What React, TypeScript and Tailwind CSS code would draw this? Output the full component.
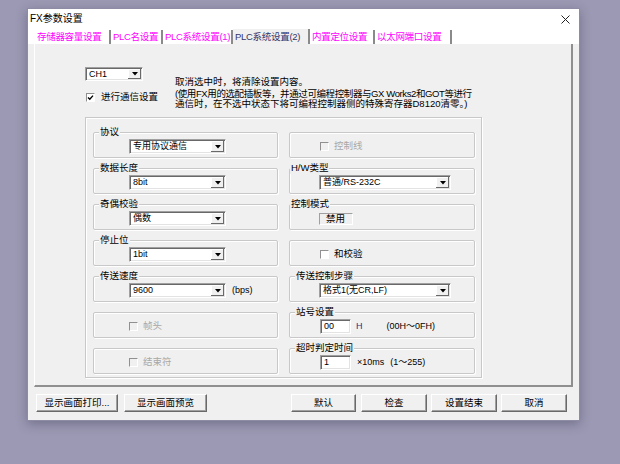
import React from 'react';

const sunken =
  'border border-t-[#a0a0a0] border-l-[#a0a0a0] border-r-white border-b-white shadow-[inset_1px_1px_0_#696969,inset_-1px_-1px_0_#e3e3e3]';

function Select({ value, w, h = 'h-[15px]' }: { value: string; w: string; h?: string }) {
  return (
    <div className={`${w} ${h} ${sunken} bg-white flex items-stretch`}>
      <div className="flex-1 flex items-center pl-[3px] text-[9px] leading-none whitespace-nowrap overflow-hidden">{value}</div>
      <div className="w-[13px] m-[1px] bg-[#f0f0f0] shadow-[inset_-1px_-1px_0_#696969,inset_1px_1px_0_#fff] flex items-center justify-center">
        <svg width="6" height="4" viewBox="0 0 6 4">
          <path d="M0 0H6L3 3.5Z" fill="#000" />
        </svg>
      </div>
    </div>
  );
}

function Check({ checked = false, disabled = false }: { checked?: boolean; disabled?: boolean }) {
  return (
    <div
      className={`w-[9px] h-[9px] shrink-0 border border-t-[#909090] border-l-[#909090] border-r-white border-b-white flex items-center justify-center ${
        disabled ? 'bg-[#f0f0f0]' : 'bg-white'
      }`}
    >
      {checked && (
        <svg width="7" height="7" viewBox="0 0 7 7">
          <path d="M1 3.5L2.8 5.3L6 1.6" stroke="#000" strokeWidth="1.4" fill="none" />
        </svg>
      )}
    </div>
  );
}

function CheckLabel({ text, checked, disabled }: { text: string; checked?: boolean; disabled?: boolean }) {
  return (
    <div className="flex items-center gap-[5px]">
      <Check checked={checked} disabled={disabled} />
      <span className={disabled ? 'text-[#a8a8a8]' : 'text-black'}>{text}</span>
    </div>
  );
}

function Group({
  label,
  labelX = 'left-[5px]',
  pad,
  children,
}: {
  label?: string;
  labelX?: string;
  pad: string;
  children: React.ReactNode;
}) {
  return (
    <div
      className={`relative h-[26px] rounded-[2px] border border-[#c8c8c8] shadow-[inset_1px_1px_0_#fff,1px_1px_0_#fff] flex items-center pt-[3px] ${pad}`}
    >
      {label && (
        <span className={`absolute -top-[7px] ${labelX} bg-[#f0f0f0] px-[1px] leading-[12px] whitespace-nowrap`}>{label}</span>
      )}
      {children}
    </div>
  );
}

function Input({ value }: { value: string }) {
  return (
    <div className={`w-[31px] h-[15px] ${sunken} bg-white flex items-center pl-[3px] text-[9px] leading-none`}>{value}</div>
  );
}

function Button({ text, w, ml }: { text: string; w: string; ml: string }) {
  return (
    <div
      className={`${w} ${ml} h-[18px] bg-[#f0f0f0] border border-t-white border-l-white border-r-[#696969] border-b-[#696969] shadow-[inset_-1px_-1px_0_#a0a0a0] flex items-center justify-center whitespace-nowrap`}
    >
      {text}
    </div>
  );
}

const tabs = [
  { t: '存储器容量设置', w: 'w-[76px]' },
  { t: 'PLC名设置', w: 'w-[52px]' },
  { t: 'PLC系统设置(1)', w: 'w-[70px]' },
  { t: 'PLC系统设置(2)', w: 'w-[77px]', active: true },
  { t: '内置定位设置', w: 'w-[65px]' },
  { t: '以太网端口设置', w: 'w-[77px]' },
];

export default function App() {
  return (
    <div className="w-[620px] h-[464px] bg-[#9b99b3] pt-[8px] pl-[27px] overflow-hidden font-['Liberation_Sans','Noto_Sans_CJK_SC',sans-serif] text-[9.5px] text-black">
      <div className="w-[553px] h-[413px] bg-[#f0f0f0] border border-[#8e8ca4] shadow-[0_3px_10px_rgba(40,40,70,0.35)] flex flex-col">
        {/* title bar */}
        <div className="h-[20px] bg-white flex items-center justify-between pl-[2px] pr-[9px]">
          <span className="text-[10px] leading-none">FX参数设置</span>
          <svg width="9" height="9" viewBox="0 0 9 9">
            <path d="M0.5 0.5L8.5 8.5M8.5 0.5L0.5 8.5" stroke="#222" strokeWidth="1" />
          </svg>
        </div>

        {/* tabs */}
        <div className="h-[15px] bg-white flex items-end pl-[7px]">
          {tabs.map((tab) => (
            <div
              key={tab.t}
              className={`${tab.w} ${
                tab.active ? 'h-[15px] bg-[#f0f0f0] text-[#33336b]' : 'h-[14px] bg-white text-[#ff00ff]'
              } border-r-2 border-r-[#8a8a8a] flex items-center pl-[2px] whitespace-nowrap leading-none tracking-[-0.3px] overflow-hidden`}
            >
              {tab.t}
            </div>
          ))}
        </div>

        {/* panel */}
        <div className="ml-[6px] w-[539px] h-[343px] bg-[#f0f0f0] border-l border-l-white border-r-2 border-b-2 border-r-[#8f8f8f] border-b-[#8f8f8f] pl-[50px] pt-[23px] flex flex-col">
          <div className="h-[50px] flex">
            <div className="w-[90px] flex flex-col">
              <Select value="CH1" w="w-[58px]" h="h-[14px]" />
              <div className="mt-[10px] h-[12px] flex items-center gap-[6px] pl-[1px]">
                <Check checked />
                <span>进行通信设置</span>
              </div>
            </div>
            <div className="mt-[10px] leading-[10px] whitespace-nowrap">
              <div className="mb-[2px]">取消选中时，将清除设置内容。</div>
              <div className="tracking-[-0.4px]">(使用FX用的选配插板等，并通过可编程控制器与GX Works2和GOT等进行</div>
              <div>通信时，在不选中状态下将可编程控制器侧的特殊寄存器D8120清零。)</div>
            </div>
          </div>

          <div className="w-[397px] h-[261px] border border-[#c8c8c8] shadow-[inset_1px_1px_0_#fff,1px_1px_0_#fff] pt-[14px] pl-[7px] grid grid-cols-[185px_186px] gap-x-[11px] gap-y-[10px] content-start">
            <Group label="协议" pad="pl-[35px]">
              <Select value="专用协议通信" w="w-[97px]" />
            </Group>
            <Group pad="pl-[30px]">
              <CheckLabel text="控制线" disabled />
            </Group>

            <Group label="数据长度" pad="pl-[35px]">
              <Select value="8bit" w="w-[97px]" />
            </Group>
            <Group label="H/W类型" labelX="left-[0px]" pad="pl-[29px]">
              <Select value="普通/RS-232C" w="w-[132px]" />
            </Group>

            <Group label="奇偶校验" pad="pl-[35px]">
              <Select value="偶数" w="w-[97px]" />
            </Group>
            <Group label="控制模式" labelX="left-[0px]" pad="pl-[29px]">
              <div className="w-[34px] h-[12px] border-t border-l border-t-[#a0a0a0] border-l-[#a0a0a0] border-r border-b border-r-white border-b-white flex items-center pl-[6px] leading-none">
                禁用
              </div>
            </Group>

            <Group label="停止位" pad="pl-[35px]">
              <Select value="1bit" w="w-[97px]" />
            </Group>
            <Group pad="pl-[30px]">
              <CheckLabel text="和校验" />
            </Group>

            <Group label="传送速度" pad="pl-[35px]">
              <Select value="9600" w="w-[97px]" />
              <span className="ml-[6px] text-[9px]">(bps)</span>
            </Group>
            <Group label="传送控制步骤" pad="pl-[29px]">
              <Select value="格式1(无CR,LF)" w="w-[132px]" />
            </Group>

            <Group pad="pl-[35px]">
              <CheckLabel text="帧头" disabled />
            </Group>
            <Group label="站号设置" pad="pl-[30px]">
              <Input value="00" />
              <span className="ml-[5px] text-[#2d2d8f] text-[9px]">H</span>
              <span className="ml-[24px] text-[9px]">(00H～0FH)</span>
            </Group>

            <Group pad="pl-[35px]">
              <CheckLabel text="结束符" disabled />
            </Group>
            <Group label="超时判定时间" pad="pl-[30px]">
              <Input value="1" />
              <span className="ml-[6px] text-[9px]">×10ms</span>
              <span className="ml-[6px] text-[9px]">(1～255)</span>
            </Group>
          </div>
        </div>

        {/* buttons */}
        <div className="mt-[7px] flex">
          <Button text="显示画面打印..." w="w-[82px]" ml="ml-[8px]" />
          <Button text="显示画面预览" w="w-[83px]" ml="ml-[6px]" />
          <Button text="默认" w="w-[65px]" ml="ml-[84px]" />
          <Button text="检查" w="w-[66px]" ml="ml-[5px]" />
          <Button text="设置结束" w="w-[66px]" ml="ml-[4px]" />
          <Button text="取消" w="w-[66px]" ml="ml-[4px]" />
        </div>
      </div>
    </div>
  );
}
